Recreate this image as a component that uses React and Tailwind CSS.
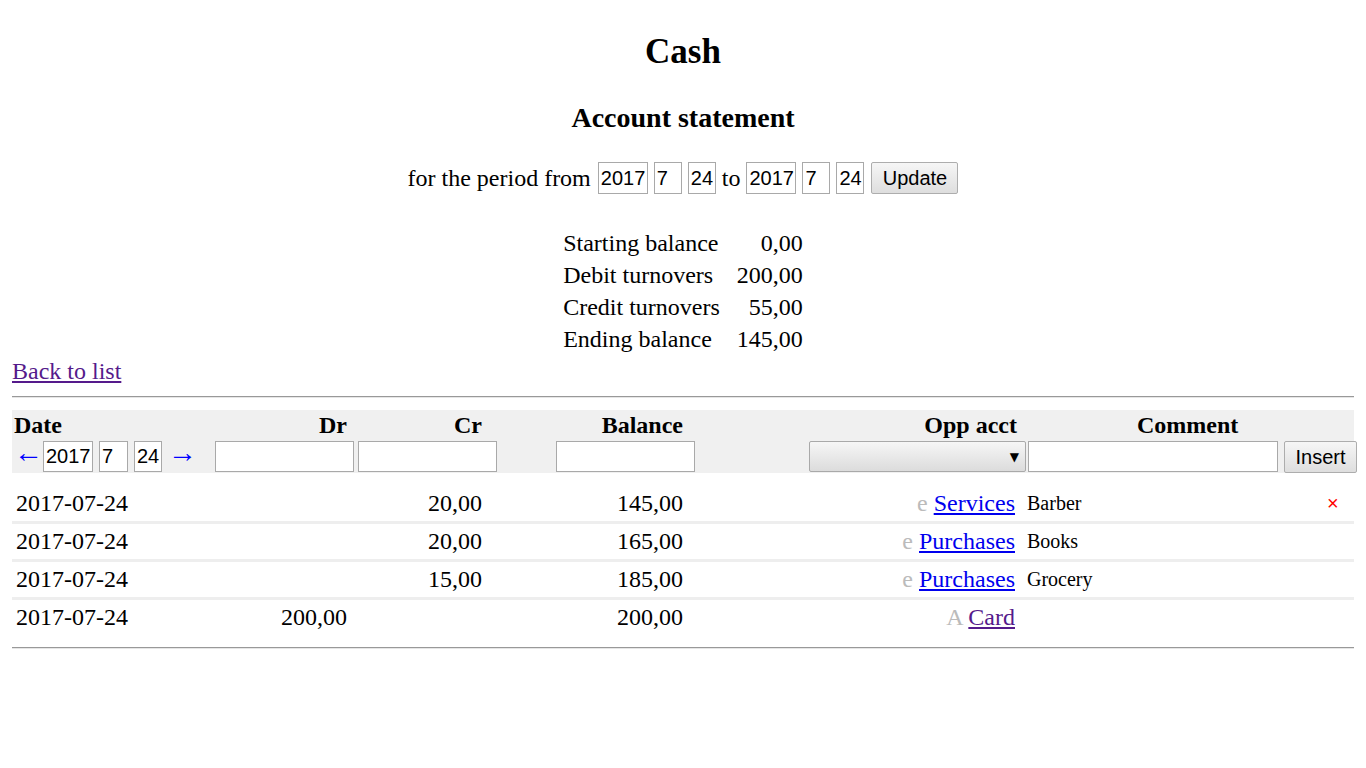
import React from 'react'

const inputCls = 'h-[32px] border border-[#a9a9a9] bg-white px-[2px] text-[20px] leading-[30px] font-["Liberation_Sans",Arial,sans-serif] text-black'
const smallInput = 'h-[31px] border border-[#a9a9a9] bg-white px-[2px] text-[20px] leading-[29px] font-["Liberation_Sans",Arial,sans-serif] text-black'
const btnCls = 'border border-[#adadad] rounded-[2px] bg-gradient-to-b from-[#f6f6f6] to-[#dedede] text-[20px] font-["Liberation_Sans",Arial,sans-serif] text-black flex items-center justify-center'

const summary = [
  ['Starting balance', '0,00'],
  ['Debit turnovers', '200,00'],
  ['Credit turnovers', '55,00'],
  ['Ending balance', '145,00'],
]

const rows = [
  { date: '2017-07-24', dr: '', cr: '20,00', bal: '145,00', mark: 'e', acct: 'Services', visited: false, comment: 'Barber', del: true },
  { date: '2017-07-24', dr: '', cr: '20,00', bal: '165,00', mark: 'e', acct: 'Purchases', visited: false, comment: 'Books' },
  { date: '2017-07-24', dr: '', cr: '15,00', bal: '185,00', mark: 'e', acct: 'Purchases', visited: false, comment: 'Grocery' },
  { date: '2017-07-24', dr: '200,00', cr: '', bal: '200,00', mark: 'A', acct: 'Card', visited: true, comment: '' },
]

function Field({ value, w, cls = inputCls }) {
  return <div className={`${cls} ${w} shrink-0 whitespace-nowrap overflow-hidden`}>{value}</div>
}

export default function App() {
  return (
    <div className="min-h-screen bg-white px-[12px] text-[24px] text-black font-['Liberation_Serif','Times_New_Roman',serif]">
      <h1 className="pt-[32px] text-center text-[35px] font-bold leading-[40px]">Cash</h1>
      <h2 className="mt-[30px] text-center text-[28px] font-bold leading-[32px]">Account statement</h2>

      {/* period */}
      <div className="mt-[26px] flex h-[36px] items-center justify-center leading-[36px]">
        <span>for the period from</span>
        <Field value="2017" w="w-[50px] ml-[7px]" />
        <Field value="7" w="w-[28px] ml-[6px]" />
        <Field value="24" w="w-[28px] ml-[6px]" />
        <span className="ml-[6px]">to</span>
        <Field value="2017" w="w-[50px] ml-[6px]" />
        <Field value="7" w="w-[28px] ml-[6px]" />
        <Field value="24" w="w-[28px] ml-[6px]" />
        <button className={`${btnCls} ml-[7px] h-[32px] w-[87px]`}>Update</button>
      </div>

      {/* totals */}
      <div className="mx-auto mt-[31px] grid w-fit grid-cols-[auto_auto] gap-x-[17px] leading-[32px]">
        {summary.map(([k, v]) => (
          <React.Fragment key={k}>
            <div>{k}</div>
            <div className="text-right">{v}</div>
          </React.Fragment>
        ))}
      </div>

      <a href="#" className="block w-fit leading-[32px] text-[#551a8b] underline">Back to list</a>

      <div className="mt-[9px] border-t border-b border-t-[#999] border-b-[#e6e6e6]" />

      {/* table */}
      <div className="mt-[12px] bg-[#f0f0f0]">
        <div className="grid h-[30px] grid-cols-[201px_143px_143px_200px_328px_254px_73px] font-bold leading-[30px]">
          <div className="pl-[2px]">Date</div>
          <div className="pr-[9px] text-right">Dr</div>
          <div className="pr-[17px] text-right">Cr</div>
          <div className="pr-[16px] text-right">Balance</div>
          <div className="pr-[10px] text-right">Opp acct</div>
          <div className="pl-[110px]">Comment</div>
          <div />
        </div>
        <div className="grid h-[33px] grid-cols-[201px_143px_143px_200px_328px_254px_73px] items-start pt-[1px] leading-[31px]">
          <div className="flex items-center pl-[2px]">
            <span className="w-[23px] pb-[8px] text-[29px] leading-[23px] text-[#0000ff]">←</span>
            <Field value="2017" w="w-[50px] ml-[6px]" cls={smallInput} />
            <Field value="7" w="w-[29px] ml-[6px]" cls={smallInput} />
            <Field value="24" w="w-[28px] ml-[6px]" cls={smallInput} />
            <span className="ml-[6px] w-[24px] pb-[8px] text-[29px] leading-[23px] text-[#0000ff]">→</span>
          </div>
          <div className="flex"><Field value="" w="w-[139px] ml-[2px]" cls={smallInput} /></div>
          <div className="flex"><Field value="" w="w-[139px] ml-[2px]" cls={smallInput} /></div>
          <div className="flex"><Field value="" w="w-[139px] ml-[57px]" cls={smallInput} /></div>
          <div className="flex">
            <div className="ml-[110px] flex h-[31px] w-[217px] items-center justify-end rounded-[2px] border border-[#a9a9a9] bg-gradient-to-b from-[#f6f6f6] to-[#dcdcdc] pr-[6px]">
              <span className="font-['DejaVu_Sans',sans-serif] text-[12px] leading-none">▼</span>
            </div>
          </div>
          <div className="flex"><Field value="" w="w-[250px] ml-[1px]" cls={smallInput} /></div>
          <div className="flex">
            <button className={`${btnCls} ml-[3px] h-[32px] w-[73px] shrink-0`}>Insert</button>
          </div>
        </div>
      </div>

      <div className="mt-[13px]">
        {rows.map((r, i) => (
          <div
            key={i}
            className={`grid h-[38px] grid-cols-[201px_143px_143px_200px_328px_254px_73px] items-center border-b-[3px] leading-[35px] ${i < rows.length - 1 ? 'border-[#eeeeee]' : 'border-transparent'}`}
          >
            <div className="pl-[4px]">{r.date}</div>
            <div className="pr-[9px] text-right">{r.dr}</div>
            <div className="pr-[17px] text-right">{r.cr}</div>
            <div className="pr-[16px] text-right">{r.bal}</div>
            <div className="pr-[12px] text-right">
              <span className="text-[#bbbbbb]">{r.mark}</span>{' '}
              <a href="#" className={`underline ${r.visited ? 'text-[#551a8b]' : 'text-[#0000ee]'}`}>{r.acct}</a>
            </div>
            <div className="text-[20px]">{r.comment}</div>
            <div className="pl-[46px] font-['Liberation_Sans',Arial,sans-serif] text-[20px] text-[#ff0000]">{r.del ? '×' : ''}</div>
          </div>
        ))}
      </div>

      <div className="mt-[9px] border-t border-b border-t-[#999] border-b-[#e6e6e6]" />
    </div>
  )
}
